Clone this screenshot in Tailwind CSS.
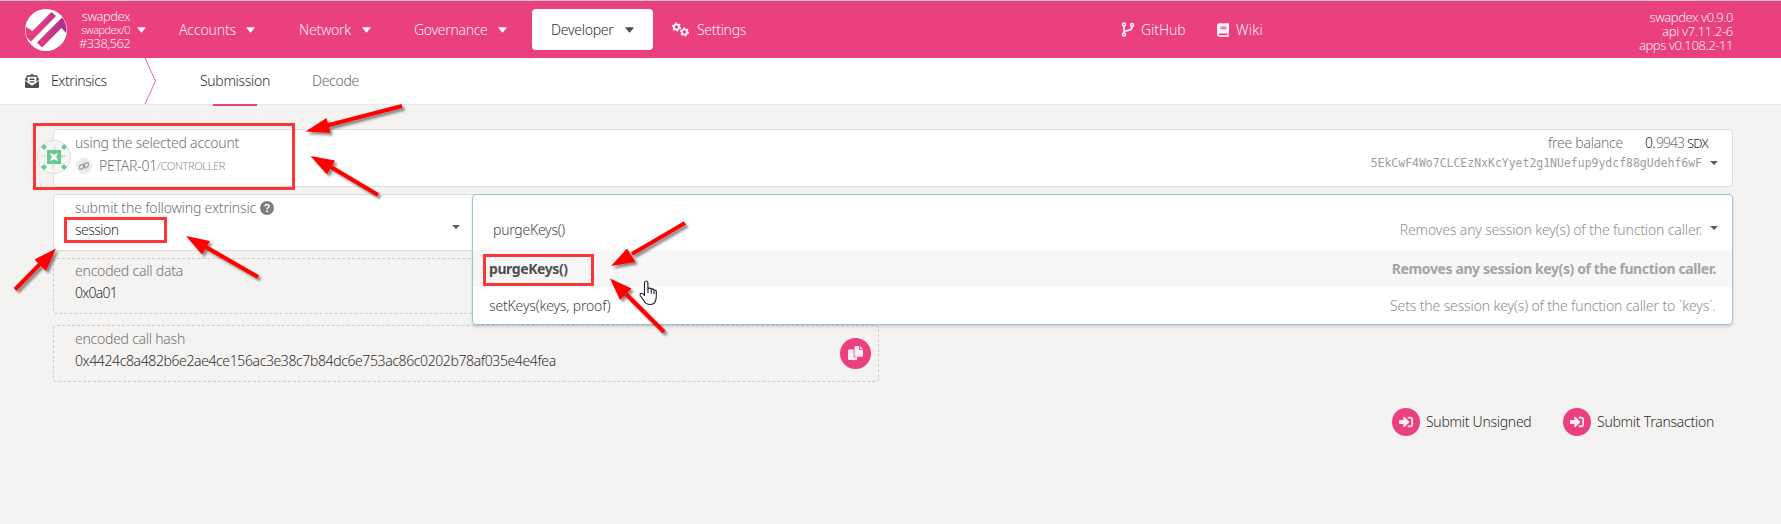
<!DOCTYPE html>
<html lang="en">
<head>
<meta charset="utf-8">
<title>Extrinsics</title>
<script src="https://cdn.jsdelivr.net/npm/@tailwindcss/browser@4"></script>
</head>
<body class="relative h-[524px] w-[1781px] overflow-hidden bg-[#f4f3f1] font-['Noto_Sans',sans-serif] text-[14px] leading-5 font-light text-[#303030] whitespace-nowrap">

<svg class="hidden">
  <symbol id="caret" viewBox="0 0 10 6"><path d="M.9 0h8.2q1 .1.4.9L5.6 5.400q-.6.6-1.200 0L.5.9Q-.1.1.9 0z"/></symbol>
  <symbol id="signin" viewBox="0 0 512 512"><path d="M416 448h-84c-6.600 0-12-5.400-12-12v-40c0-6.600 5.400-12 12-12h84c17.700 0 32-14.300 32-32V160c0-17.700-14.300-32-32-32h-84c-6.600 0-12-5.400-12-12V76c0-6.600 5.400-12 12-12h84c53 0 96 43 96 96v192c0 53-43 96-96 96zm-47-209L201 71c-15-15-41-4.500-41 17v96H24c-13.300 0-24 10.700-24 24v96c0 13.300 10.700 24 24 24h136v96c0 21.500 26 32 41 17l168-168c9.300-9.400 9.300-24.600 0-34z"/></symbol>
</svg>

<header class="flex h-[58px] items-center border-t border-[#ccc] bg-[#ea4080] text-white/95">
  <svg class="ml-[25px] h-[42px] w-[42px]" viewBox="0 0 42 42">
    <defs><linearGradient id="lg" x1="0" x2="1"><stop offset="0" stop-color="#ea4080"/><stop offset=".45" stop-color="#d83a85"/><stop offset="1" stop-color="#a42f8e"/></linearGradient>
    <clipPath id="c"><circle cx="21" cy="21" r="20.500"/></clipPath></defs>
    <circle cx="21" cy="21" r="21" fill="#fff"/>
    <path clip-path="url(#c)" fill="url(#lg)" d="M0 17l7.500 5L26.500 3l4.500 4L6 32.500 0 27zM12 33.500L37.500 8 42 14v11l-5.500-6L17 38.500z"/>
  </svg>
  <div class="ml-3 w-[51px] text-right text-[13px] leading-[14px]">
    <div class="tracking-[-0.5px]">swapdex</div>
    <div class="text-[11px] leading-[13px] tracking-[-0.53px]">swapdex/0</div>
    <div class="tracking-[-0.6px]">#338,562</div>
  </div>
  <svg class="ml-[7px] h-[6px] w-[9px] fill-current"><use href="#caret"/></svg>
  <nav class="flex items-center">
    <div class="ml-[33px] flex items-center"><span class="w-[67px] tracking-[-0.14px]">Accounts</span><svg class="h-[6px] w-[9px] fill-current"><use href="#caret"/></svg></div>
    <div class="ml-[44px] flex items-center"><span class="w-[63px] tracking-[-0.24px]">Network</span><svg class="h-[6px] w-[9px] fill-current"><use href="#caret"/></svg></div>
    <div class="ml-[43px] flex items-center"><span class="w-[84px] tracking-[-0.3px]">Governance</span><svg class="h-[6px] w-[9px] fill-current"><use href="#caret"/></svg></div>
    <div class="ml-[25px] flex h-[41px] w-[121px] items-center rounded-[4px] bg-white pl-[19px] text-[#303030]"><span class="w-[74px] tracking-[-0.26px]">Developer</span><svg class="h-[6px] w-[9px] fill-[#4e4e4e]"><use href="#caret"/></svg></div>
    <svg class="ml-[19px] h-[15px] w-[17px] fill-none stroke-current" viewBox="0 0 17 15">
      <circle cx="4.500" cy="5" r="2.600" stroke-width="1.800"/><circle cx="4.500" cy="5" r="3.900" stroke-width="1.300" stroke-dasharray="2 2.084"/>
      <circle cx="12.500" cy="10" r="2.600" stroke-width="1.800"/><circle cx="12.500" cy="10" r="3.900" stroke-width="1.300" stroke-dasharray="2 2.084"/>
    </svg>
    <span class="ml-2 w-[49px] tracking-[-0.31px]">Settings</span>
  </nav>
  <svg class="ml-[375px] h-[15px] w-[14px] fill-none stroke-current" viewBox="0 0 14 15">
    <circle cx="3" cy="2.500" r="1.500" stroke-width="1.500"/><circle cx="3" cy="12.500" r="1.500" stroke-width="1.500"/><circle cx="11" cy="3" r="1.500" stroke-width="1.500"/>
    <path stroke-width="1.700" d="M3 4v7M11 4.500q0 3.300-3 3.700L3 9.500"/>
  </svg>
  <span class="ml-[6px] w-[45px] tracking-[-0.09px]">GitHub</span>
  <svg class="ml-[31px] h-[14px] w-[12px]" viewBox="0 0 448 512"><path fill="currentColor" d="M448 360V24c0-13.300-10.700-24-24-24H96C43 0 0 43 0 96v320c0 53 43 96 96 96h328c13.300 0 24-10.700 24-24v-16c0-7.500-3.500-14.300-8.900-18.700-4.200-15.400-4.200-59.300 0-74.700 5.400-4.300 8.900-11.100 8.900-18.600zM128 134c0-3.300 2.700-6 6-6h212c3.300 0 6 2.700 6 6v20c0 3.300-2.700 6-6 6H134c-3.300 0-6-2.700-6-6v-20zm0 64c0-3.300 2.700-6 6-6h212c3.300 0 6 2.700 6 6v20c0 3.300-2.700 6-6 6H134c-3.300 0-6-2.700-6-6v-20zm253.400 250H96c-17.700 0-32-14.300-32-32 0-17.600 14.400-32 32-32h285.400c-1.900 17.100-1.900 46.900 0 64z"/></svg>
  <span class="ml-[7px] w-[27px] tracking-[0.24px]">Wiki</span>
  <div class="mt-[2px] mr-[48px] ml-auto text-right text-[13px] leading-[14px]">
    <div class="tracking-[-0.45px]">swapdex v0.9.0</div>
    <div class="tracking-[-0.3px]">api v7.11.2-6</div>
    <div class="tracking-[-0.41px]">apps v0.108.2-11</div>
  </div>
</header>

<div class="flex h-[47px] items-center border-b border-[#e9e9e8] bg-white">
  <svg class="ml-[25px] h-[14px] w-[14px] fill-[#4e4e4e]" viewBox="0 0 512 512"><path d="M176 216h160c8.800 0 16-7.200 16-16v-16c0-8.800-7.200-16-16-16H176c-8.800 0-16 7.200-16 16v16c0 8.800 7.200 16 16 16zm-16 80c0 8.800 7.200 16 16 16h160c8.800 0 16-7.200 16-16v-16c0-8.800-7.200-16-16-16H176c-8.800 0-16 7.200-16 16v16zm96 121.100c-16.400 0-32.800-5.100-46.900-15.200L0 250.900V464c0 26.500 21.500 48 48 48h416c26.500 0 48-21.500 48-48V250.900L302.900 401.900c-14 10.100-30.500 15.200-46.900 15.200zm237.600-254.200c-8.900-6.900-17.200-13.500-29.600-22.800V96c0-26.500-21.500-48-48-48h-77.600c-3-2.200-5.900-4.300-9-6.600C312.600 29.200 279.200-.3 256 0c-23.200-.3-56.600 29.200-73.400 41.400-3.200 2.300-6 4.400-9 6.600H96c-26.500 0-48 21.500-48 48v44.100c-12.400 9.300-20.700 15.800-29.600 22.800A48 48 0 0 0 0 200.700v10.700l96 69.400V96h320v184.700l96-69.400v-10.700c0-14.700-6.800-28.700-18.400-37.700z"/></svg>
  <span class="ml-[12px] w-[56px] tracking-[-0.42px]">Extrinsics</span>
  <svg class="ml-[37px] h-[46px] w-[13px] fill-none stroke-[#ea4080]" viewBox="0 0 13 46" stroke-width=".8"><path d="M1 0l10.500 23L1 46"/></svg>
  <div class="relative ml-[43px] flex h-[46px] w-[71px] items-center tracking-[-0.32px]">Submission<i class="absolute top-[46px] left-[13px] h-[2px] w-[44px] bg-[#ea4080]"></i></div>
  <span class="ml-[41px] tracking-[-0.29px] text-[#686868]">Decode</span>
</div>

<main class="relative mt-6 ml-[53px] w-[1680px]">
  <section class="flex h-[58px] justify-between rounded-[4px] border border-[#dedddc] bg-white pt-[3px] pr-[14px] pl-[21px] text-[#727272]">
    <div>
      <div class="tracking-[-0.23px]">using the selected account</div>
      <div class="mt-[3px] flex items-center">
        <span class="ml-[1px] flex h-4 w-4 items-center justify-center rounded-full bg-[#ebebea]"><svg class="h-[10px] w-[10px] fill-none stroke-[#999]" viewBox="0 0 10 10" stroke-width="1.200"><rect x="-.2" y="3.700" width="6" height="3.600" rx="1.800" transform="rotate(-38 3 5.500)"/><rect x="4.200" y="2.700" width="6" height="3.600" rx="1.800" transform="rotate(-38 7 4.500)"/></svg></span>
        <span class="ml-[7px] w-[58px] tracking-[-0.23px]">PETAR-01</span><span class="text-[11px] tracking-[-0.35px] text-[#909090]">/CONTROLLER</span>
      </div>
    </div>
    <div>
      <div class="flex justify-end pr-[9px]"><span class="w-[97px] tracking-[-0.26px]">free balance</span><span class="w-[11px] tracking-[-0.7px] text-[#222]">0.</span><span class="w-[31px] tracking-[-1px]">9943</span><span class="w-[22px] text-[13px] tracking-[-0.74px] text-[#222]">SDX</span></div>
      <div class="flex items-center justify-end"><span class="mr-[8px] font-['DejaVu_Sans_Mono',monospace] text-[11.5px] leading-[20px] tracking-[-0.02px] text-[#9d9d9d]">5EkCwF4Wo7CLCEzNxKcYyet2g1NUefup9ydcf88gUdehf6wF</span><svg class="h-[4px] w-[8px] fill-[#5e5e5e]" viewBox="0 0 8 4"><path d="M0 0h8L4 4z"/></svg></div>
    </div>
  </section>

  <section class="mt-[7px] h-[57px] w-[430px] rounded-l-[4px] border border-[#dedddc] bg-white pt-[3px] pl-[21px]">
    <div class="flex items-center text-[#727272]"><span class="w-[185px] tracking-[-0.16px]">submit the following extrinsic</span><svg class="h-[14px] w-[14px]" viewBox="0 0 14 14"><circle cx="7" cy="7" r="7" fill="#7e7e7e"/><path d="M4.900 5.400Q5.200 3.600 7 3.600T9.100 5.200Q9.100 6.200 7.900 6.800 7 7.300 7 8.300" fill="none" stroke="#fff" stroke-width="1.500"/><circle cx="7" cy="10.300" r="1" fill="#fff"/></svg></div>
    <div class="mt-[2px] flex items-center justify-between pr-[22px]"><span class="tracking-[-0.54px]">session</span><svg class="mt-[-6px] h-[4px] w-[8px] fill-[#5e5e5e]" viewBox="0 0 8 4"><path d="M0 0h8L4 4z"/></svg></div>
  </section>

  <section class="mt-[7px] h-[56px] w-[826px] rounded-[4px] border border-dashed border-[#cfcecd] pt-[2px] pl-[21px]">
    <div class="tracking-[-0.21px] text-[#727272]">encoded call data</div>
    <div class="mt-[2px] tracking-[-0.76px]">0x0a01</div>
  </section>
  <section class="mt-[11px] flex h-[57px] w-[826px] justify-between rounded-[4px] border border-dashed border-[#cfcecd] pt-[3px] pr-[7px] pl-[21px]">
    <div><div class="tracking-[-0.25px] text-[#727272]">encoded call hash</div>
    <div class="mt-[2px] tracking-[-0.39px]">0x4424c8a482b6e2ae4ce156ac3e38c7b84dc6e753ac86c0202b78af035e4e4fea</div></div>
    <span class="mt-[9px] flex h-[31px] w-[31px] items-center justify-center rounded-full bg-[#ea4080]"><svg class="h-[15px] w-[15px] fill-white/90" viewBox="0 0 15 15"><path d="M1 3.500h4.700v7.800h3.500V13q0 1-1 1H1q-1 0-1-1V4.500q0-1 1-1z"/><path d="M7.500 0H11v3.800h4V10q0 .8-.8.8H7.300q-.8 0-.8-.8V1q0-1 1-1zM12 0l3 2.900h-3z"/></svg></span>
  </section>

  <section class="mt-[26px] flex justify-end pr-[19px]">
    <div class="mr-[31px] flex h-7 items-center"><span class="flex h-7 w-7 items-center justify-center rounded-full bg-[#ea4080]"><svg class="h-[14px] w-[14px] fill-white/90"><use href="#signin"/></svg></span><span class="ml-[6px] w-[106px] tracking-[-0.28px]">Submit Unsigned</span></div>
    <div class="flex h-7 items-center"><span class="flex h-7 w-7 items-center justify-center rounded-full bg-[#ea4080]"><svg class="h-[14px] w-[14px] fill-white/90"><use href="#signin"/></svg></span><span class="ml-[6px] w-[117px] tracking-[-0.26px]">Submit Transaction</span></div>
  </section>

  <div class="absolute top-[65px] left-[419px] h-[131px] w-[1261px] rounded-[4px] border border-[#96c8da] bg-white shadow-[0_2px_3px_0_rgba(34,36,38,0.15)]">
    <div class="flex h-[55px] items-start justify-between pt-[25px] pr-[14px] pl-[20px]"><span class="tracking-[-0.26px] text-[#444]">purgeKeys()</span><span class="flex items-start text-[#8e8e8e]"><span class="mr-[8px] tracking-[-0.13px]">Removes any session key(s) of the function caller.</span><svg class="mt-[6px] h-[4px] w-[8px] fill-[#5e5e5e]" viewBox="0 0 8 4"><path d="M0 0h8L4 4z"/></svg></span></div>
    <div class="flex h-[37px] justify-between bg-[#f7f7f7] pt-[9px] pr-[16px] pl-[16px] font-bold text-[#4e4e4e]"><span class="tracking-[-0.42px]">purgeKeys()</span><span class="tracking-[-0.39px] text-[#a4a4a4]">Removes any session key(s) of the function caller.</span></div>
    <div class="flex h-[37px] justify-between pt-[9px] pr-[16px] pl-[16px]"><span class="tracking-[-0.17px] text-[#444]">setKeys(keys, proof)</span><span class="tracking-[-0.14px] text-[#8e8e8e]">Sets the session key(s) of the function caller to `keys`.</span></div>
  </div>

  <svg class="absolute top-[11px] left-[-16px] h-[34px] w-[34px]" viewBox="-17 -17 34 34">
    <circle r="16.500" fill="#f6f6f5" stroke="#ddd"/>
    <g fill="#dcdcdb"><path d="M-1.500-7l3-6v6zM1.500 7l-3 6V7zM7 1.500l7-3-7-1zM-7-1.500l-7-1 5 3z"/></g>
    <rect x="-7" y="-7" width="14" height="14" fill="#64ca90"/><path d="M0-2.200L4-4 2.200 0 4 4 0 2.200-4 4-2.200 0-4-4z" fill="#fff"/>
    <g fill="#64ca90"><path d="M-10-13l3 3-3 3-3-3zM10-13l3 3-3 3-3-3zM-10 7l3 3-3 3-3-3zM10 7l3 3-3 3-3-3z"/></g>
  </svg>
</main>

<svg class="absolute top-0 left-0 h-[524px] w-[1781px]" viewBox="0 0 1781 524">
  <defs>
    <filter id="sh" x="-20%" y="-20%" width="150%" height="150%"><feDropShadow dx="2.500" dy="2.500" stdDeviation="1.300" flood-color="#000" flood-opacity=".45"/></filter>
  </defs>
  <g fill="none" stroke="#ff3535" stroke-width="3">
    <rect x="34.500" y="124.500" width="259" height="64"/><rect x="65.500" y="218.500" width="100" height="23"/><rect x="484.500" y="255.500" width="108" height="29"/>
  </g>
  <g stroke="#f00" fill="#f00" stroke-width="4" filter="url(#sh)">
    <path d="M402 106L327 125.500"/><path stroke="none" d="M305.500 131.500L326.500 118l4 15z"/>
    <path d="M378 195L331 167"/><path stroke="none" d="M310.500 156L335 160.500l-8 14z"/>
    <path d="M15 289.500L40 264"/><path stroke="none" d="M56 248.500L34.500 259.500 46 271z"/>
    <path d="M258 277L205 246.500"/><path stroke="none" d="M186 236L210 241l-8 13.500z"/>
    <path d="M685 223L632 254"/><path stroke="none" d="M611 266L627 248.500l8.500 13.500z"/>
    <path d="M664 332L626 294"/><path stroke="none" d="M610 278.500L631.500 288.500 620 300z"/>
  </g>
  <path d="M644.500 294.500V283q0-2 1.700-2t1.700 2v5.500q2.500-1 3.300.6 2-.8 2.800.9 2.300-.4 2.300 1.500v4.500q0 8.500-6 8.500-4.500 0-6.300-3.500l-3.800-5.500q-.5-2.500 1.500-2.300 1.300.2 2.800 2.300zM648 288v5M651.300 289.500v4M654 290.500v3.500" fill="#fff" stroke="#1a1a2e" stroke-width="1.100" stroke-linejoin="round"/>
</svg>
</body>
</html>
